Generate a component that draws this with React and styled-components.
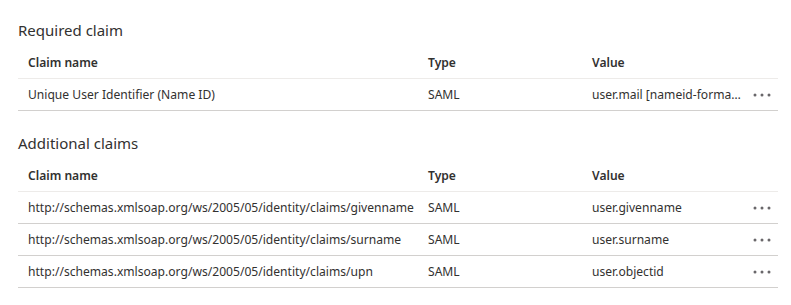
import React from 'react';
import styled, { createGlobalStyle } from 'styled-components';

const GlobalStyle = createGlobalStyle`
  body {
    margin: 0;
    background: #ffffff;
    font-family: "Segoe UI", "Noto Sans", "Open Sans", sans-serif;
    color: #323130;
  }
`;

const Page = styled.div`
  display: flex;
  flex-direction: column;
  gap: 22px;
  padding: 20px 13px 0 18px;
  width: 760px;
`;

const Section = styled.section`
  display: flex;
  flex-direction: column;
`;

const Heading = styled.h2`
  margin: 0 0 7px 0;
  font-size: 15px;
  line-height: 20px;
  font-weight: 400;
  color: #323130;
`;

const Row = styled.div`
  box-sizing: border-box;
  display: grid;
  grid-template-columns: 400px 164px 163px 33px;
  align-items: center;
  height: 32px;
  border-bottom: 1px solid ${({ header }) => (header ? '#edebe9' : '#d2d0ce')};
  font-size: 12.1px;
  font-weight: ${({ header }) => (header ? 600 : 400)};
`;

const Cell = styled.div`
  padding: 0 ${({ clip }) => (clip ? '0' : '10px')} 0 10px;
  white-space: nowrap;
  overflow: ${({ clip }) => (clip ? 'hidden' : 'visible')};
  text-overflow: ellipsis;
`;

const MoreButton = styled.button`
  display: flex;
  align-items: center;
  justify-content: center;
  border: none;
  background: none;
  padding: 0;
  width: 33px;
  height: 31px;
  color: #69676a;
`;

const More = () => (
  <MoreButton aria-label="More actions">
    <svg width="18" height="4" viewBox="0 0 18 4">
      <circle cx="2" cy="2" r="1.5" fill="currentColor" />
      <circle cx="9" cy="2" r="1.5" fill="currentColor" />
      <circle cx="16" cy="2" r="1.5" fill="currentColor" />
    </svg>
  </MoreButton>
);

const ClaimTable = ({ title, rows }) => (
  <Section>
    <Heading>{title}</Heading>
    <Row header>
      <Cell>Claim name</Cell>
      <Cell>Type</Cell>
      <Cell>Value</Cell>
      <div />
    </Row>
    {rows.map((r) => (
      <Row key={r.name}>
        <Cell>{r.name}</Cell>
        <Cell>{r.type}</Cell>
        <Cell clip>{r.value}</Cell>
        <More />
      </Row>
    ))}
  </Section>
);

const required = [
  { name: 'Unique User Identifier (Name ID)', type: 'SAML', value: 'user.mail [nameid-format:emailAddress]' },
];

const additional = [
  { name: 'http://schemas.xmlsoap.org/ws/2005/05/identity/claims/givenname', type: 'SAML', value: 'user.givenname' },
  { name: 'http://schemas.xmlsoap.org/ws/2005/05/identity/claims/surname', type: 'SAML', value: 'user.surname' },
  { name: 'http://schemas.xmlsoap.org/ws/2005/05/identity/claims/upn', type: 'SAML', value: 'user.objectid' },
];

const App = () => (
  <>
    <GlobalStyle />
    <Page>
      <ClaimTable title="Required claim" rows={required} />
      <ClaimTable title="Additional claims" rows={additional} />
    </Page>
  </>
);

export default App;
